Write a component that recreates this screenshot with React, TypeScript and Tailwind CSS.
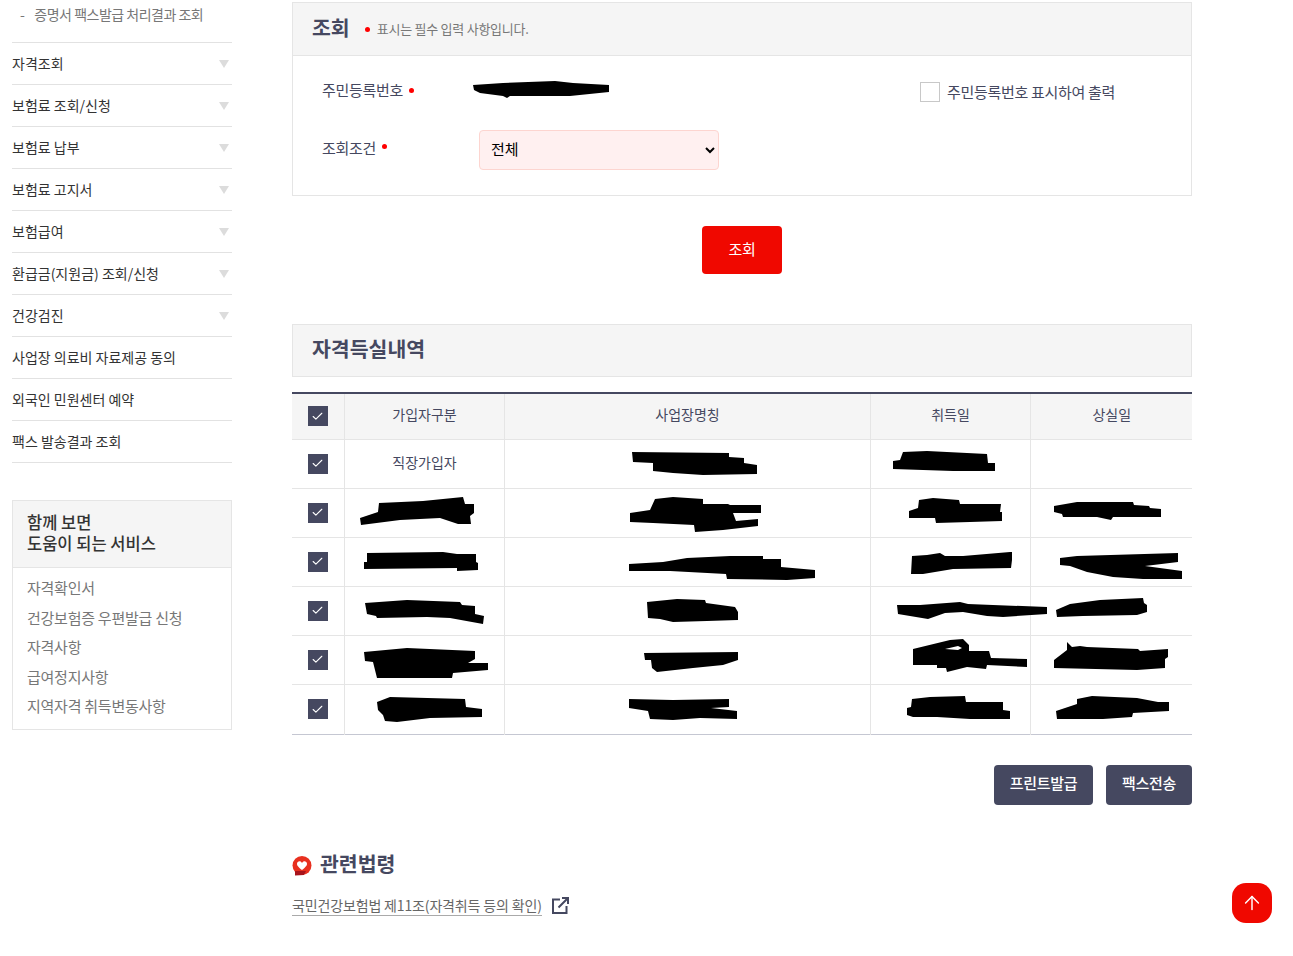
import React from "react";
import { ArrowUp, Check } from "lucide-react";

const FONT = "font-['Noto_Sans_CJK_KR','Noto_Sans',sans-serif]";

const menuItems = [
  { label: "자격조회", arrow: true },
  { label: "보험료 조회/신청", arrow: true },
  { label: "보험료 납부", arrow: true },
  { label: "보험료 고지서", arrow: true },
  { label: "보험급여", arrow: true },
  { label: "환급금(지원금) 조회/신청", arrow: true },
  { label: "건강검진", arrow: true },
  { label: "사업장 의료비 자료제공 동의", arrow: false },
  { label: "외국인 민원센터 예약", arrow: false },
  { label: "팩스 발송결과 조회", arrow: false },
];

const services = [
  "자격확인서",
  "건강보험증 우편발급 신청",
  "자격사항",
  "급여정지사항",
  "지역자격 취득변동사항",
];

// redaction scribbles, traced in page coordinates
const scribbles = [
  "632,452 729,453 729,457 744,458 744,463 757,465 757,474 703,475 673,473 653,471 653,463 633,462",
  "893,461 900,460 903,452 927,451 987,454 988,463 995,463 995,471 953,471 893,469",
  "360,518 378,512 379,503 423,501 463,497 465,504 474,504 474,513 470,516 471,524 458,524 440,518 400,520 361,525",
  "630,513 650,510 655,499 673,497 703,499 703,504 728,504 730,505 761,505 761,513 733,513 736,521 758,519 758,526 723,530 695,532 694,525 653,523 630,522",
  "909,511 918,508 919,500 933,498 959,500 960,504 1001,504 1000,512 1002,512 1002,521 970,522 936,523 935,518 909,518",
  "1054,506 1077,502 1133,502 1134,505 1149,506 1150,508 1161,509 1161,517 1113,517 1111,520 1097,517 1063,517 1062,514 1054,512",
  "367,553 443,552 457,554 476,554 476,562 478,563 478,570 457,571 457,568 364,569 364,562 367,562",
  "629,564 663,562 687,558 730,556 763,556 763,559 781,559 781,567 815,570 815,578 787,580 727,579 726,574 670,571 629,571",
  "912,556 927,555 940,553 945,556 963,556 1010,552 1012,552 1012,560 1011,568 953,569 923,574 911,574",
  "1060,558 1077,556 1178,553 1178,562 1145,566 1182,571 1182,579 1143,579 1113,577 1087,572 1070,566 1060,565",
  "365,603 407,600 460,602 462,605 475,606 475,614 484,616 483,624 450,618 427,617 377,618 376,616 367,614",
  "647,602 677,599 705,600 706,603 735,607 738,612 738,620 707,621 673,622 660,619 648,618",
  "897,605 920,605 960,602 968,604 1047,607 1047,614 1003,617 987,616 963,612 945,613 928,619 898,614",
  "1056,610 1070,604 1100,600 1143,598 1144,603 1147,605 1147,612 1137,615 1083,616 1057,617",
  "364,652 407,648 475,651 475,659 468,663 488,663 488,670 453,673 452,678 377,678 373,662 365,661",
  "644,653 738,652 738,660 723,665 693,668 657,672 652,668 651,660 645,660",
  "913,649 950,640 963,639 969,645 969,651 989,651 991,658 1027,659 1027,667 987,665 986,669 967,667 947,672 946,668 937,668 937,665 913,665",
  "1054,660 1067,650 1067,642 1072,647 1080,646 1087,647 1138,649 1140,651 1168,649 1168,657 1165,659 1165,668 1137,670 1054,668",
  "377,702 390,697 465,699 466,707 482,709 482,717 430,718 397,722 385,721 383,715 378,710",
  "629,699 673,700 729,699 729,707 711,708 737,711 737,719 700,718 673,720 650,719 648,711 629,708",
  "912,699 930,697 965,696 966,702 1003,702 1003,710 1010,711 1010,719 970,719 937,717 913,717 907,715 907,708 911,707",
  "1056,711 1077,704 1077,699 1092,696 1137,698 1158,702 1169,702 1169,711 1133,713 1132,717 1103,719 1057,719",
];

const rows = ["직장가입자", "", "", "", "", ""];

const CheckBox = () => (
  <span className="w-5 h-5 bg-[#454860] flex items-center justify-center">
    <Check size={13} strokeWidth={2} className="text-white" />
  </span>
);

const Dot = () => <span className="w-[5px] h-[5px] rounded-full bg-[#f00] inline-block" />;

const App: React.FC = () => {
  return (
    <div className={`${FONT} h-[956px] overflow-hidden bg-white flex text-[#454860]`}>
      {/* Sidebar */}
      <aside className="w-[220px] ml-3 shrink-0">
        <div className="h-[43px] pl-2 text-sm tracking-[-0.5px] text-[#777] border-b border-[#e2e2e2] leading-[28px]">
          <span className="mr-[10px]">-</span>증명서 팩스발급 처리결과 조회
        </div>
        <ul>
          {menuItems.map((m) => (
            <li
              key={m.label}
              className="h-[42px] pb-[2px] border-b border-[#e2e2e2] flex items-center justify-between text-sm text-[#333]"
            >
              <span>{m.label}</span>
              {m.arrow && (
                <span className="mr-[3px] w-0 h-0 border-x-[5px] border-x-transparent border-t-[8px] border-t-[#dcdcdc] translate-y-[1px]" />
              )}
            </li>
          ))}
        </ul>
        <div className="mt-[37px] border border-[#e5e5e5] h-[230px]">
          <div className="bg-[#f5f5f5] border-b border-[#e5e5e5] h-[67px] px-[14px] pt-[11px] text-[16.5px] font-medium text-[#333]">
            <p className="h-[21px] leading-[21px]">함께 보면</p>
            <p className="h-[21px] leading-[21px]">도움이 되는 서비스</p>
          </div>
          <ul className="px-[14px] pt-[5px] text-[15px] tracking-[-0.25px] text-[#777]">
            {services.map((s) => (
              <li key={s} className="h-[29.5px] leading-[29.5px]">
                {s}
              </li>
            ))}
          </ul>
        </div>
      </aside>

      {/* Main */}
      <main className="ml-[60px] w-[900px] shrink-0 pt-[2px]">
        <section className="border border-[#e5e5e5] h-[194px]">
          <div className="h-[53px] bg-[#f5f5f5] border-b border-[#e5e5e5] flex items-center pl-[19px]">
            <h2 className="text-[20.5px] font-bold pb-[4px]">조회</h2>
            <span className="ml-[15px] flex"><Dot /></span>
            <span className="ml-[7px] text-[13px] tracking-[-0.25px] text-[#777]">표시는 필수 입력 사항입니다.</span>
          </div>
          <div className="flex items-center h-[74px]">
            <div className="w-[180px] pl-[29px] text-[15px] tracking-[-0.3px] flex items-center gap-[6px] -mt-[6px]">
              주민등록번호 <Dot />
            </div>
            <div className="w-[447px] -mt-[6px]">
              <svg width="138" height="18" viewBox="473 82 138 18" className="block">
                <polygon
                  points="473,86 503,84 555,82 573,84 609,86 609,93 570,97 510,97 507,99 503,97 480,94 474,91"
                  fill="#000"
                />
              </svg>
            </div>
            <span className="w-5 h-5 border border-[#c8c8c8] -mt-[2px]" />
            <span className="ml-[7px] text-[15px] tracking-[-0.3px] -mt-[2px]">주민등록번호 표시하여 출력</span>
          </div>
          <div className="flex items-center h-[40px]">
            <div className="w-[186px] pl-[29px] text-[15px] tracking-[-0.3px] flex items-center gap-[6px] -mt-[4px]">
              조회조건 <span className="-mt-[3px] flex"><Dot /></span>
            </div>
            <select className="w-[240px] h-10 bg-[#fff0f0] border border-[#fdd5d0] rounded pl-[7px] pr-[1px] pb-[3px] text-[15px] text-black">
              <option>전체</option>
            </select>
          </div>
        </section>

        <div className="flex justify-center mt-[30px]">
          <button className="w-20 h-12 pb-[2px] bg-[#f00800] rounded-sm text-white text-[15px] tracking-[-0.3px]">조회</button>
        </div>

        <section className="mt-[50px] h-[53px] bg-[#f5f5f5] border border-[#e5e5e5] flex items-center pl-[19px]">
          <h2 className="text-[20.5px] font-bold pb-[5px]">자격득실내역</h2>
        </section>

        <div className="relative mt-[15px]">
          <table className="w-[900px] table-fixed border-collapse border-t-2 border-t-[#454860] border-b border-b-[#c5c7d2] text-sm">
            <colgroup>
              <col className="w-[52px]" />
              <col className="w-[160px]" />
              <col className="w-[366px]" />
              <col className="w-[160px]" />
              <col className="w-[162px]" />
            </colgroup>
            <thead>
              <tr className="h-[46px] bg-[#f5f5f5] border-b border-[#e5e5e5]">
                <th className="border-r border-[#e5e5e5] p-0">
                  <div className="flex justify-center"><CheckBox /></div>
                </th>
                {["가입자구분", "사업장명칭", "취득일", "상실일"].map((h, i) => (
                  <th key={h} className={`font-normal p-0 pl-[1px] pb-[5px] ${i < 3 ? "border-r border-[#e5e5e5]" : ""}`}>
                    {h}
                  </th>
                ))}
              </tr>
            </thead>
            <tbody>
              {rows.map((type, i) => (
                <tr key={i} className="h-[49px] last:h-[50px] border-b border-[#e5e5e5] last:border-b-0">
                  <td className="border-r border-[#e5e5e5] p-0">
                    <div className="flex justify-center"><CheckBox /></div>
                  </td>
                  <td className="p-0 pl-[1px] pb-[3px] text-center border-r border-[#e5e5e5]">{type}</td>
                  <td className="p-0 border-r border-[#e5e5e5]" />
                  <td className="p-0 border-r border-[#e5e5e5]" />
                  <td className="p-0" />
                </tr>
              ))}
            </tbody>
          </table>
          {/* redaction marks over the table cells */}
          <svg
            width="900"
            height="343"
            viewBox="292 392 900 343"
            className="absolute left-0 top-0 pointer-events-none"
          >
            {scribbles.map((p, i) => (
              <polygon key={i} points={p} fill="#000" />
            ))}
            <polygon points="945,649 958,646 962,648 958,650" fill="#fff" />
          </svg>
        </div>

        <div className="flex justify-end gap-[13px] mt-[30px]">
          <button className="w-[99px] h-10 pb-[2px] bg-[#454860] rounded text-white text-[15px] tracking-[-0.3px] font-medium">프린트발급</button>
          <button className="w-[86px] h-10 pb-[2px] bg-[#454860] rounded text-white text-[15px] tracking-[-0.3px] font-medium">팩스전송</button>
        </div>

        <h3 className="mt-[44px] flex items-center gap-2 text-[20.5px] font-bold">
          <svg width="20" height="20" viewBox="0 0 20 20">
            <circle cx="10" cy="9.5" r="9.5" fill="#e8301f" />
            <path d="M3 15 L3 19.5 L12 19 L14 15 Z" fill="#a8141c" />
            <path d="M10 14 C6 11 5 9.5 5 7.8 C5 6 7 4.8 8.6 5.6 C9.3 6 9.7 6.4 10 7 C10.3 6.4 10.7 6 11.4 5.6 C13 4.8 15 6 15 7.8 C15 9.5 14 11 10 14 Z" fill="#fff" />
          </svg>
          <span className="pb-[4px] -translate-y-[1px]">관련법령</span>
        </h3>
        <div className="mt-[12px] flex items-center gap-[10px] text-sm tracking-[-0.15px] text-[#666]">
          <span className="border-b border-[#aaa] leading-[20px]">국민건강보험법 제11조(자격취득 등의 확인)</span>
          <svg width="17" height="17" viewBox="0 0 17 17" fill="none" stroke="#454860" strokeWidth="2">
            <path d="M8 2.5 H1 V16 H14.5 V9" />
            <path d="M6.5 10.5 L15.5 1.5 M10 1 H16 V7" />
          </svg>
        </div>
      </main>

      {/* Floating top button */}
      <button className="fixed left-[1232px] top-[883px] w-10 h-10 rounded-[14px] bg-[#f00800] flex items-center justify-center text-white">
        <ArrowUp size={22} strokeWidth={1.6} />
      </button>
    </div>
  );
};

export default App;
